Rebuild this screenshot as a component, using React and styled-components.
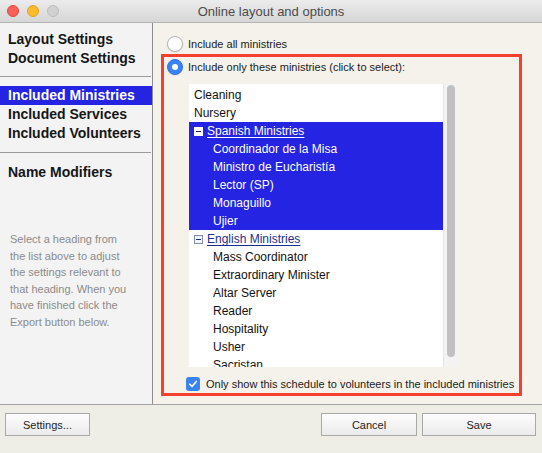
import React from "react";
import styled, { createGlobalStyle } from "styled-components";

const GlobalStyle = createGlobalStyle`
  html, body {
    margin: 0;
    padding: 0;
    background: #f5f2eb;
  }
  body {
    font-family: "Liberation Sans", Arial, sans-serif;
  }
`;

const navTop = ["Layout Settings", "Document Settings"];
const navMid = ["Included Ministries", "Included Services", "Included Volunteers"];

const helpLines = [
  "Select a heading from",
  "the list above to adjust",
  "the settings relevant to",
  "that heading. When you",
  "have finished click the",
  "Export button below.",
];

const tree = [
  { label: "Cleaning" },
  { label: "Nursery" },
  {
    label: "Spanish Ministries",
    selected: true,
    children: ["Coordinador de la Misa", "Ministro de Eucharistía", "Lector (SP)", "Monaguillo", "Ujier"],
  },
  {
    label: "English Ministries",
    children: ["Mass Coordinator", "Extraordinary Minister", "Altar Server", "Reader", "Hospitality", "Usher", "Sacristan"],
  },
];

function App() {
  return (
    <>
      <GlobalStyle />
      <Window>
        <TitleBar>
          <Lights>
            <Light $bg="#fc5f57" $border="#de4841" />
            <Light $bg="#fdbc2e" $border="#dea224" />
            <Light $bg="#d1d1d1" $border="#bcbcbc" />
          </Lights>
          <Title>Online layout and options</Title>
          <span />
        </TitleBar>

        <Body>
          <Sidebar>
            {navTop.map((n) => (
              <NavItem key={n}>{n}</NavItem>
            ))}
            <Separator />
            {navMid.map((n, i) => (
              <NavItem key={n} $active={i === 0}>{n}</NavItem>
            ))}
            <Separator $last />
            <NavItem>Name Modifiers</NavItem>
            <HelpText>
              {helpLines.map((l) => (
                <div key={l}>{l}</div>
              ))}
            </HelpText>
          </Sidebar>

          <Content>
            <RadioRow $outside>
              <Radio />
              Include all ministries
            </RadioRow>
            <Group>
              <RadioRow>
                <Radio $checked />
                Include only these ministries (click to select):
              </RadioRow>
              <ListBox>
                <Rows>
                  {tree.map((item) =>
                    item.children ? (
                      <React.Fragment key={item.label}>
                        <Row $selected={item.selected}>
                          <Expander $selected={item.selected} />
                          <GroupLabel $selected={item.selected}>{item.label}</GroupLabel>
                        </Row>
                        {item.children.map((c) => (
                          <Row key={c} $selected={item.selected} $child>
                            {c}
                          </Row>
                        ))}
                      </React.Fragment>
                    ) : (
                      <Row key={item.label}>{item.label}</Row>
                    )
                  )}
                </Rows>
                <ScrollTrack>
                  <ScrollThumb />
                </ScrollTrack>
              </ListBox>
              <CheckRow>
                <CheckBox>
                  <svg width="10" height="10" viewBox="0 0 10 10">
                    <path d="M1.8 5.2 L4 7.4 L8.3 2.4" fill="none" stroke="#fff" strokeWidth="1.6" strokeLinecap="round" strokeLinejoin="round" />
                  </svg>
                </CheckBox>
                Only show this schedule to volunteers in the included ministries
              </CheckRow>
            </Group>
          </Content>
        </Body>

        <Footer>
          <Button $w={85}>Settings...</Button>
          <Spacer />
          <Button $w={96}>Cancel</Button>
          <Button $w={114}>Save</Button>
        </Footer>
      </Window>
    </>
  );
}

const Window = styled.div`
  width: 542px;
  height: 453px;
  display: flex;
  flex-direction: column;
  overflow: hidden;
`;

const TitleBar = styled.div`
  height: 22px;
  flex-shrink: 0;
  display: grid;
  grid-template-columns: 1fr auto 1fr;
  align-items: center;
  background: linear-gradient(#ececec, #d6d6d6);
  border-bottom: 1px solid #b4b4b4;
`;

const Lights = styled.div`
  display: flex;
  gap: 8px;
  padding-left: 7px;
`;

const Light = styled.span`
  width: 12px;
  height: 12px;
  box-sizing: border-box;
  border-radius: 50%;
  background: ${(p) => p.$bg};
  border: 1px solid ${(p) => p.$border};
`;

const Title = styled.div`
  font-size: 13px;
  color: #4b4b4b;
`;

const Body = styled.div`
  flex: 1;
  display: flex;
  min-height: 0;
`;

const Sidebar = styled.div`
  width: 152px;
  flex-shrink: 0;
  background: #f3f3f3;
  border-right: 1px solid #8e8e8e;
  padding-top: 7px;
  box-sizing: content-box;
`;

const NavItem = styled.div`
  height: 19px;
  line-height: 19px;
  padding-left: 8px;
  font-size: 14px;
  font-weight: bold;
  color: ${(p) => (p.$active ? "#ffffff" : "#161616")};
  background: ${(p) => (p.$active ? "#2424e2" : "transparent")};
  white-space: nowrap;
`;

const Separator = styled.div`
  height: 1px;
  background: #9b9b9b;
  margin: ${(p) => (p.$last ? "9px 1px 10px 0" : "8px 1px 9px 0")};
`;

const HelpText = styled.div`
  margin-top: 49px;
  margin-left: 10px;
  font-size: 11px;
  line-height: 16.5px;
  color: #8b8b8b;
  white-space: nowrap;
`;

const Content = styled.div`
  flex: 1;
  background: #f5f2eb;
  padding: 13px 20px 0 8px;
`;

const RadioRow = styled.div`
  display: flex;
  align-items: center;
  gap: 5px;
  height: 16px;
  font-size: 11px;
  color: #1b1b1b;
  margin-left: ${(p) => (p.$outside ? "6px" : "0")};
`;

const Radio = styled.span`
  width: 16px;
  height: 16px;
  box-sizing: border-box;
  border-radius: 50%;
  flex-shrink: 0;
  position: relative;
  background: ${(p) => (p.$checked ? "#3a83f7" : "#ffffff")};
  border: 1px solid ${(p) => (p.$checked ? "#2f73e4" : "#b3b3b3")};
  box-shadow: 0 0.5px 1px rgba(0, 0, 0, 0.12);
  &::after {
    content: "";
    display: ${(p) => (p.$checked ? "block" : "none")};
    position: absolute;
    left: 50%;
    top: 50%;
    width: 6px;
    height: 6px;
    margin: -3px 0 0 -3px;
    border-radius: 50%;
    background: #ffffff;
  }
`;

const Group = styled.div`
  margin-top: 2px;
  border: 3px solid #f4402f;
  padding: 2px 0 2px 3px;
`;

const ListBox = styled.div`
  margin: 9px 0 0 22px;
  width: 269px;
  height: 283px;
  display: flex;
  background: #ffffff;
`;

const Rows = styled.div`
  flex: 1;
  overflow: hidden;
  padding-top: 2px;
`;

const Row = styled.div`
  height: 18px;
  line-height: 18px;
  display: flex;
  align-items: center;
  gap: 4px;
  padding-left: ${(p) => (p.$child ? "24px" : "5px")};
  font-size: 12px;
  white-space: nowrap;
  color: ${(p) => (p.$selected ? "#ffffff" : "#111111")};
  background: ${(p) => (p.$selected ? "#2424e2" : "transparent")};
`;

const Expander = styled.span`
  width: 9px;
  height: 9px;
  box-sizing: border-box;
  flex-shrink: 0;
  position: relative;
  border: 1px solid ${(p) => (p.$selected ? "#ffffff" : "#7f8db0")};
  background: ${(p) => (p.$selected ? "#ffffff" : "#f3f5fa")};
  &::after {
    content: "";
    position: absolute;
    left: 1px;
    right: 1px;
    top: 3px;
    height: 1px;
    background: #1c2a78;
  }
`;

const GroupLabel = styled.span`
  text-decoration: underline;
  text-underline-offset: 2px;
  color: ${(p) => (p.$selected ? "#ffffff" : "#1d2f8e")};
`;

const ScrollTrack = styled.div`
  width: 15px;
  flex-shrink: 0;
  background: #f3f3f3;
  border-left: 1px solid #e6e6e6;
  box-sizing: border-box;
  padding: 1px 0 0 3px;
`;

const ScrollThumb = styled.div`
  width: 8px;
  height: 272px;
  border-radius: 4px;
  background: #c1c1c1;
`;

const CheckRow = styled.div`
  margin: 10px 0 0 19px;
  display: flex;
  align-items: center;
  gap: 6px;
  height: 14px;
  font-size: 11px;
  color: #1b1b1b;
  white-space: nowrap;
`;

const CheckBox = styled.span`
  width: 14px;
  height: 14px;
  border-radius: 3px;
  background: #3a83f7;
  display: flex;
  align-items: center;
  justify-content: center;
  flex-shrink: 0;
`;

const Footer = styled.div`
  height: 40px;
  flex-shrink: 0;
  border-top: 1px solid #a3a3a3;
  background: #efeee6;
  display: flex;
  align-items: flex-start;
  gap: 5px;
  padding: 8px 6px 0 5px;
  box-sizing: content-box;
`;

const Spacer = styled.div`
  flex: 1;
`;

const Button = styled.button`
  width: ${(p) => p.$w}px;
  height: 23px;
  border: 1px solid #a9a9a9;
  border-radius: 0;
  background: linear-gradient(#fdfdfd, #ebebeb);
  font-family: "Liberation Sans", Arial, sans-serif;
  font-size: 11px;
  color: #1e1e1e;
  padding: 0;
`;

export default App;
